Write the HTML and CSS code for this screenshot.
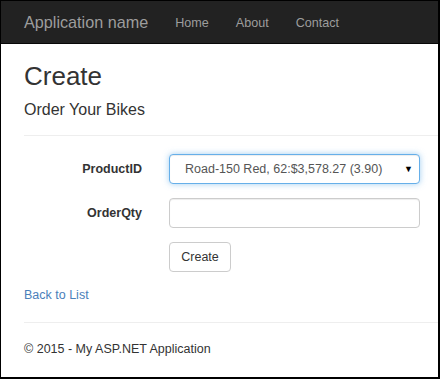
FILE: index.html
```html
<!DOCTYPE html>
<html>
<head>
<meta charset="UTF-8">
<link rel="stylesheet" href="styles.css">
</head>
<body>
<div class="frame">
  <div class="navbar">
    <a class="brand" href="#">Application name</a>
    <a class="nav-link" href="#">Home</a>
    <a class="nav-link" href="#">About</a>
    <a class="nav-link" href="#">Contact</a>
  </div>

  <div class="content">
    <h2 class="title">Create</h2>
    <h4 class="subtitle">Order Your Bikes</h4>
    <hr>

    <form class="form">
      <div class="form-row">
        <label for="product">ProductID</label>
        <div class="select-wrap">
          <select id="product" class="control select">
            <option>Road-150 Red, 62:$3,578.27 (3.90)</option>
          </select>
        </div>
      </div>
      <div class="form-row">
        <label for="qty">OrderQty</label>
        <input type="text" id="qty" class="control">
      </div>
      <div class="form-row">
        <span class="spacer"></span>
        <button type="submit" class="btn">Create</button>
      </div>
    </form>

    <a class="back-link" href="#">Back to List</a>
    <hr class="footer-rule">
    <p class="footer">&copy; 2015 - My ASP.NET Application</p>
  </div>
</div>
</body>
</html>
```

FILE: styles.css
```css
* {
  box-sizing: border-box;
  margin: 0;
  padding: 0;
}

body {
  font-family: "Liberation Sans", Arial, sans-serif;
  font-size: 12.5px;
  color: #333;
  background: #fff;
}

.frame {
  width: 440px;
  height: 379px;
  border: 1px solid #000;
  border-right-width: 2px;
  border-bottom-width: 2px;
  overflow: hidden;
}

/* Top navigation */
.navbar {
  height: 43px;
  background: #222;
  border-bottom: 1px solid #080808;
  display: flex;
  align-items: center;
  gap: 27px;
  padding-left: 23px;
  padding-top: 1px;
}

.navbar a {
  text-decoration: none;
  color: #9d9d9d;
}

.brand {
  font-size: 16.2px;
}

.nav-link {
  font-size: 12.6px;
}

/* Body content */
.content {
  padding-left: 23px;
}

.title {
  font-size: 26px;
  font-weight: 400;
  line-height: 29px;
  margin-top: 18px;
}

.subtitle {
  font-size: 16px;
  font-weight: 400;
  line-height: 18px;
  margin-top: 10px;
}

hr {
  border: none;
  border-top: 1px solid #eee;
  margin-top: 16px;
}

.form {
  margin-top: 18px;
  display: flex;
  flex-direction: column;
  gap: 14px;
}

.form-row {
  display: flex;
  align-items: center;
  gap: 27px;
}

.form-row label,
.spacer {
  width: 118px;
  text-align: right;
  font-weight: 700;
}

.control {
  width: 251px;
  height: 30px;
  border: 1px solid #ccc;
  border-radius: 4px;
  font-family: inherit;
  font-size: 12.5px;
  color: #555;
  background: #fff;
  box-shadow: inset 0 1px 1px rgba(0,0,0,0.075);
  padding: 0 15px;
}

.select-wrap {
  position: relative;
}

.select {
  appearance: none;
  -webkit-appearance: none;
  display: block;
  border-color: #66afe9;
  outline: none;
  box-shadow: inset 0 1px 1px rgba(0,0,0,0.075), 0 0 6px rgba(102,175,233,0.6);
}

.select-wrap::after {
  content: "\25BC";
  position: absolute;
  right: 7px;
  top: 10px;
  font-size: 9px;
  line-height: 10px;
  color: #000;
  pointer-events: none;
}

.btn {
  height: 30px;
  width: 62px;
  border: 1px solid #ccc;
  border-radius: 4px;
  background: #fff;
  color: #333;
  font-family: inherit;
  font-size: 12.5px;
}

.back-link {
  display: block;
  margin-top: 14px;
  line-height: 18px;
  color: #4a80ba;
  text-decoration: none;
}

.footer-rule {
  margin-top: 18px;
}

.footer {
  margin-top: 17px;
  line-height: 18px;
}
```
